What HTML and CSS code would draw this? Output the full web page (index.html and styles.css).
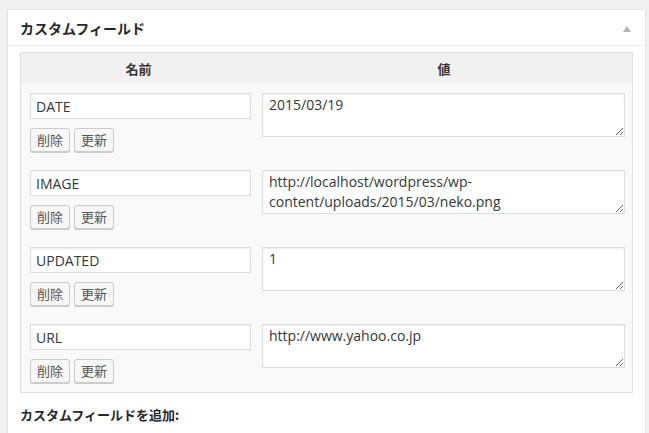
FILE: index.html
```html
<!DOCTYPE html>
<html lang="ja">
<head>
  <meta charset="UTF-8">
  <meta name="viewport" content="width=device-width, initial-scale=1.0">
  <title>カスタムフィールド</title>
  <link rel="stylesheet" href="styles.css">
</head>
<body>
  <div class="postbox">
    <div class="postbox-header">
      <h3>カスタムフィールド</h3>
      <span class="toggle-arrow"></span>
    </div>
    <div class="inside">
      <div class="list-table">
        <div class="list-head">
          <div class="head-cell">名前</div>
          <div class="head-cell">値</div>
        </div>
        <div class="list-body">
          <div class="meta-row">
            <div class="key-cell">
              <input class="meta-key" type="text" value="DATE">
              <div class="row-actions">
                <button class="small-btn">削除</button>
                <button class="small-btn">更新</button>
              </div>
            </div>
            <div class="value-cell">
              <textarea class="meta-value">2015/03/19</textarea>
            </div>
          </div>
          <div class="meta-row">
            <div class="key-cell">
              <input class="meta-key" type="text" value="IMAGE">
              <div class="row-actions">
                <button class="small-btn">削除</button>
                <button class="small-btn">更新</button>
              </div>
            </div>
            <div class="value-cell">
              <textarea class="meta-value">http://localhost/wordpress/wp-content/uploads/2015/03/neko.png</textarea>
            </div>
          </div>
          <div class="meta-row">
            <div class="key-cell">
              <input class="meta-key" type="text" value="UPDATED">
              <div class="row-actions">
                <button class="small-btn">削除</button>
                <button class="small-btn">更新</button>
              </div>
            </div>
            <div class="value-cell">
              <textarea class="meta-value">1</textarea>
            </div>
          </div>
          <div class="meta-row">
            <div class="key-cell">
              <input class="meta-key" type="text" value="URL">
              <div class="row-actions">
                <button class="small-btn">削除</button>
                <button class="small-btn">更新</button>
              </div>
            </div>
            <div class="value-cell">
              <textarea class="meta-value">http://www.yahoo.co.jp</textarea>
            </div>
          </div>
        </div>
      </div>
      <p class="add-title">カスタムフィールドを追加:</p>
    </div>
  </div>
</body>
</html>
```

FILE: styles.css
```css
body {
  margin: 0;
  padding: 9px 3px 0 7px;
  background-color: #f1f1f1;
  color: #32373c;
  font-family: "Open Sans", "Noto Sans CJK JP", sans-serif;
  font-size: 13px;
}
.postbox {
  background-color: #fff;
  border: 1px solid #e5e5e5;
  border-bottom: none;
  box-shadow: 0 1px 1px rgba(0, 0, 0, 0.04);
  min-height: 430px;
}
.postbox-header {
  display: flex;
  align-items: center;
  justify-content: space-between;
  height: 35px;
  padding: 0 14px 0 12px;
  border-bottom: 1px solid #eee;
}
.postbox-header h3 {
  margin: 0;
  font-size: 14px;
  font-weight: 600;
  color: #23282d;
  font-family: "Noto Sans CJK JP", sans-serif;
}
.toggle-arrow {
  width: 0;
  height: 0;
  border-left: 4px solid transparent;
  border-right: 4px solid transparent;
  border-bottom: 6px solid #b4b4b4;
  margin-top: 2px;
}
.inside {
  padding: 6px 12px 12px;
}
.list-table {
  border: 1px solid #dfdfdf;
  background-color: #f9f9f9;
}
.list-head {
  display: grid;
  grid-template-columns: 235px 1fr;
  background-color: #f1f1f1;
  height: 30px;
}
.head-cell {
  display: flex;
  align-items: center;
  justify-content: center;
  font-weight: bold;
  font-size: 13px;
  color: #333;
  font-family: "Noto Sans CJK JP", sans-serif;
}
.list-body {
  display: flex;
  flex-direction: column;
  gap: 18px;
  padding: 10px 0 9px;
}
.meta-row {
  display: grid;
  grid-template-columns: 235px 1fr;
}
.key-cell {
  padding: 0 5px 0 9px;
}
.value-cell {
  padding: 0 7px 0 6px;
}
.meta-key,
.meta-value {
  display: block;
  width: 100%;
  box-sizing: border-box;
  border: 1px solid #ddd;
  box-shadow: inset 0 1px 2px rgba(0, 0, 0, 0.07);
  background-color: #fff;
  color: #32373c;
  font-family: "Open Sans", "Noto Sans CJK JP", sans-serif;
  font-size: 14px;
  margin: 0;
  outline: none;
}
.meta-key {
  height: 26px;
  padding: 0 5px;
}
.meta-value {
  height: 44px;
  padding: 1px 6px;
  line-height: 20px;
  resize: vertical;
}
.row-actions {
  display: flex;
  gap: 4px;
  margin-top: 9px;
}
.small-btn {
  height: 24px;
  padding: 0 6px;
  border: 1px solid #ccc;
  border-radius: 3px;
  background-color: #f7f7f7;
  box-shadow: 0 1px 0 #ccc;
  color: #555;
  font-family: "Noto Sans CJK JP", sans-serif;
  font-size: 13px;
  line-height: 22px;
  cursor: pointer;
}
.add-title {
  margin: 12px 0 0;
  line-height: 20px;
  font-weight: bold;
  font-size: 13px;
  color: #23282d;
  font-family: "Noto Sans CJK JP", sans-serif;
}
```
